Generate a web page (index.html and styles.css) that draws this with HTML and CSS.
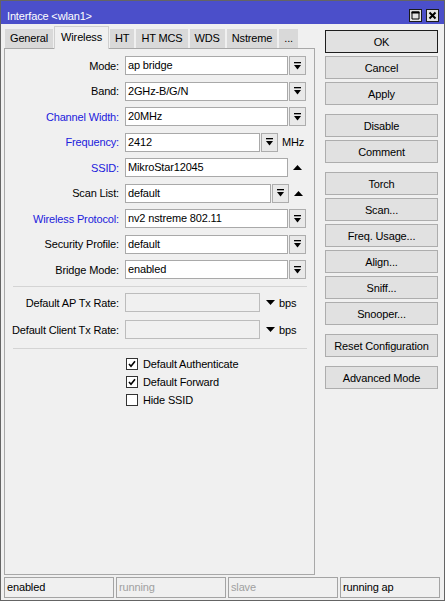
FILE: index.html
```html
<!DOCTYPE html>
<html>
<head>
<meta charset="utf-8">
<link rel="stylesheet" href="styles.css">
</head>
<body>
<div class="window">
  <div class="titlebar">
    <span class="title">Interface &lt;wlan1&gt;</span>
    <div class="tbtns">
      <span class="tbtn"><svg width="9" height="9" viewBox="0 0 9 9"><path d="M1 1h7v7H1z" fill="none" stroke="#000" stroke-width="1"/><path d="M0.5 0.5h8v2h-8z" fill="#000"/></svg></span>
      <span class="tbtn"><svg width="9" height="9" viewBox="0 0 9 9"><path d="M1.5 1.5l6 6M7.5 1.5l-6 6" stroke="#000" stroke-width="2"/></svg></span>
    </div>
  </div>
  <div class="main">
    <div class="left">
      <div class="tabs">
        <span class="tab">General</span>
        <span class="tab sel">Wireless</span>
        <span class="tab">HT</span>
        <span class="tab">HT MCS</span>
        <span class="tab">WDS</span>
        <span class="tab">Nstreme</span>
        <span class="tab">...</span>
      </div>
      <div class="panel">
        <div class="row"><span class="lbl">Mode:</span><span class="field">ap bridge</span><span class="dd"><svg width="7" height="8" viewBox="0 0 7 8"><rect x="0" y="0" width="7" height="1.3"/><path d="M0 3h7L3.5 7.5z"/></svg></span></div>
        <div class="row"><span class="lbl">Band:</span><span class="field">2GHz-B/G/N</span><span class="dd"><svg width="7" height="8" viewBox="0 0 7 8"><rect x="0" y="0" width="7" height="1.3"/><path d="M0 3h7L3.5 7.5z"/></svg></span></div>
        <div class="row"><span class="lbl blue">Channel Width:</span><span class="field">20MHz</span><span class="dd"><svg width="7" height="8" viewBox="0 0 7 8"><rect x="0" y="0" width="7" height="1.3"/><path d="M0 3h7L3.5 7.5z"/></svg></span></div>
        <div class="row"><span class="lbl blue">Frequency:</span><span class="field w135">2412</span><span class="dd"><svg width="7" height="8" viewBox="0 0 7 8"><rect x="0" y="0" width="7" height="1.3"/><path d="M0 3h7L3.5 7.5z"/></svg></span><span class="unit">MHz</span></div>
        <div class="row"><span class="lbl blue">SSID:</span><span class="field">MikroStar12045</span><span class="tri"><svg width="9" height="5" viewBox="0 0 9 5"><path d="M0 5h9L4.5 0z"/></svg></span></div>
        <div class="row"><span class="lbl">Scan List:</span><span class="field w145">default</span><span class="dd"><svg width="7" height="8" viewBox="0 0 7 8"><rect x="0" y="0" width="7" height="1.3"/><path d="M0 3h7L3.5 7.5z"/></svg></span><span class="tri"><svg width="9" height="5" viewBox="0 0 9 5"><path d="M0 5h9L4.5 0z"/></svg></span></div>
        <div class="row"><span class="lbl blue">Wireless Protocol:</span><span class="field">nv2 nstreme 802.11</span><span class="dd"><svg width="7" height="8" viewBox="0 0 7 8"><rect x="0" y="0" width="7" height="1.3"/><path d="M0 3h7L3.5 7.5z"/></svg></span></div>
        <div class="row"><span class="lbl">Security Profile:</span><span class="field">default</span><span class="dd"><svg width="7" height="8" viewBox="0 0 7 8"><rect x="0" y="0" width="7" height="1.3"/><path d="M0 3h7L3.5 7.5z"/></svg></span></div>
        <div class="row"><span class="lbl">Bridge Mode:</span><span class="field">enabled</span><span class="dd"><svg width="7" height="8" viewBox="0 0 7 8"><rect x="0" y="0" width="7" height="1.3"/><path d="M0 3h7L3.5 7.5z"/></svg></span></div>
        <div class="sep sep1"></div>
        <div class="row rate"><span class="lbl">Default AP Tx Rate:</span><span class="field w135 off"></span><span class="tri down"><svg width="9" height="5" viewBox="0 0 9 5"><path d="M0 0h9L4.5 5z"/></svg></span><span class="unit">bps</span></div>
        <div class="row rate"><span class="lbl">Default Client Tx Rate:</span><span class="field w135 off"></span><span class="tri down"><svg width="9" height="5" viewBox="0 0 9 5"><path d="M0 0h9L4.5 5z"/></svg></span><span class="unit">bps</span></div>
        <div class="sep sep2"></div>
        <div class="chk"><span class="box"><svg width="8" height="8" viewBox="0 0 8 8"><path d="M1 4l2 2.3L7 1.2" fill="none" stroke="#000" stroke-width="1.6"/></svg></span><span>Default Authenticate</span></div>
        <div class="chk"><span class="box"><svg width="8" height="8" viewBox="0 0 8 8"><path d="M1 4l2 2.3L7 1.2" fill="none" stroke="#000" stroke-width="1.6"/></svg></span><span>Default Forward</span></div>
        <div class="chk"><span class="box"></span><span>Hide SSID</span></div>
      </div>
    </div>
    <div class="right">
      <span class="btn ok">OK</span>
      <span class="btn">Cancel</span>
      <span class="btn">Apply</span>
      <span class="btn grp">Disable</span>
      <span class="btn">Comment</span>
      <span class="btn grp">Torch</span>
      <span class="btn">Scan...</span>
      <span class="btn">Freq. Usage...</span>
      <span class="btn">Align...</span>
      <span class="btn">Sniff...</span>
      <span class="btn">Snooper...</span>
      <span class="btn grp">Reset Configuration</span>
      <span class="btn grp">Advanced Mode</span>
    </div>
  </div>
  <div class="status">
    <span class="cell">enabled</span>
    <span class="cell dim">running</span>
    <span class="cell dim">slave</span>
    <span class="cell last">running ap</span>
  </div>
</div>
</body>
</html>
```
FILE: styles.css
```css
* { box-sizing: border-box; }
html, body { margin: 0; padding: 0; }
body {
  font-family: "Liberation Sans", Arial, sans-serif;
  font-size: 11px;
  letter-spacing: -0.15px;
  color: #000;
  background: #f0f0f0;
}
.window {
  width: 445px;
  height: 601px;
  border: 1px solid #646464;
  background: #f0f0f0;
  display: flex;
  flex-direction: column;
}
.titlebar {
  flex: none;
  height: 23px;
  background: #4b4fca;
  color: #fff;
  display: flex;
  align-items: flex-end;
  justify-content: space-between;
  padding: 0 5px 1px 6px;
}
.title { line-height: 13px; }
.tbtns { display: flex; gap: 4px; margin-bottom: 1px; }
.tbtn {
  width: 13px;
  height: 13px;
  border: 1px solid #1a1a1a;
  background: #e4e4e4;
  display: flex;
  align-items: center;
  justify-content: center;
}
.main {
  flex: none;
  height: 551px;
  display: flex;
  padding: 0 6px 0 3px;
}
.left {
  width: 311px;
  display: flex;
  flex-direction: column;
}
.tabs {
  display: flex;
  align-items: flex-end;
  height: 22px;
  margin-top: 2px;
  padding-left: 1px;
  position: relative;
  z-index: 1;
}
.tab {
  height: 19px;
  line-height: 19px;
  padding: 0 5px;
  background: #d9d9d9;
  margin-right: 2px;
  white-space: nowrap;
}
.tab.sel {
  height: 23px;
  line-height: 20px;
  margin-bottom: -1px;
  margin-left: -1px;
  margin-right: 1px;
  padding: 0 6px;
  background: #f0f0f0;
  border: 1px solid #cfcfcf;
  border-bottom: none;
}
.panel {
  flex: 1;
  border: 1px solid #a8a8a8;
  background: #f0f0f0;
  padding-top: 7px;
}
.row {
  display: flex;
  align-items: center;
  height: 19px;
  margin-bottom: 6.5px;
}
.row.rate { margin-bottom: 8px; }
.lbl {
  flex: none;
  width: 115px;
  padding-right: 1px;
  margin-right: 5px;
  text-align: right;
  white-space: nowrap;
}
.blue { color: #2020dc; }
.field {
  flex: none;
  width: 163px;
  height: 19px;
  line-height: 17px;
  padding-left: 2px;
  border: 1px solid #a9a9a9;
  background: #fff;
  white-space: nowrap;
  overflow: hidden;
}
.field.w135 { width: 135px; }
.field.w145 { width: 146px; }
.field.off { background: #f0f0f0; border-color: #bcbcbc; }
.dd {
  flex: none;
  width: 17px;
  height: 19px;
  margin-left: 1px;
  border: 1px solid #adadad;
  background: #e9e9e9;
  display: flex;
  align-items: center;
  justify-content: center;
}
.tri {
  flex: none;
  margin-left: 5px;
  display: flex;
  align-items: center;
}
.tri.down { margin-left: 6px; }
.unit { margin-left: 4px; }
.sep { height: 1px; background: #d4d4d4; margin-left: 8px; margin-right: 7px; }
.sep1 { margin-top: 7px; margin-bottom: 6px; }
.sep2 { margin-top: 9px; margin-bottom: 6px; }
.chk {
  display: flex;
  align-items: center;
  height: 18px;
  padding-left: 121px;
}
.box {
  flex: none;
  width: 12px;
  height: 12px;
  border: 1px solid #333;
  background: #fff;
  margin-right: 5px;
  display: flex;
  align-items: center;
  justify-content: center;
}
.right {
  width: 113px;
  margin-left: 10px;
  padding-top: 6px;
  display: flex;
  flex-direction: column;
  gap: 3px;
}
.btn {
  flex: none;
  height: 23px;
  border: 1px solid #adadad;
  background: #e1e1e1;
  display: flex;
  align-items: center;
  justify-content: center;
  white-space: nowrap;
}
.btn.ok { border-color: #1e1e1e; }
.btn.grp { margin-top: 6px; }
.status {
  flex: none;
  display: flex;
  gap: 2px;
  margin-top: 2px;
  padding-left: 3px;
}
.cell {
  width: 110px;
  height: 21px;
  line-height: 19px;
  padding-left: 2px;
  border: 1px solid #a4a4a4;
  white-space: nowrap;
}
.cell.last { width: 100px; }
.dim { color: #a0a0a0; }
```
